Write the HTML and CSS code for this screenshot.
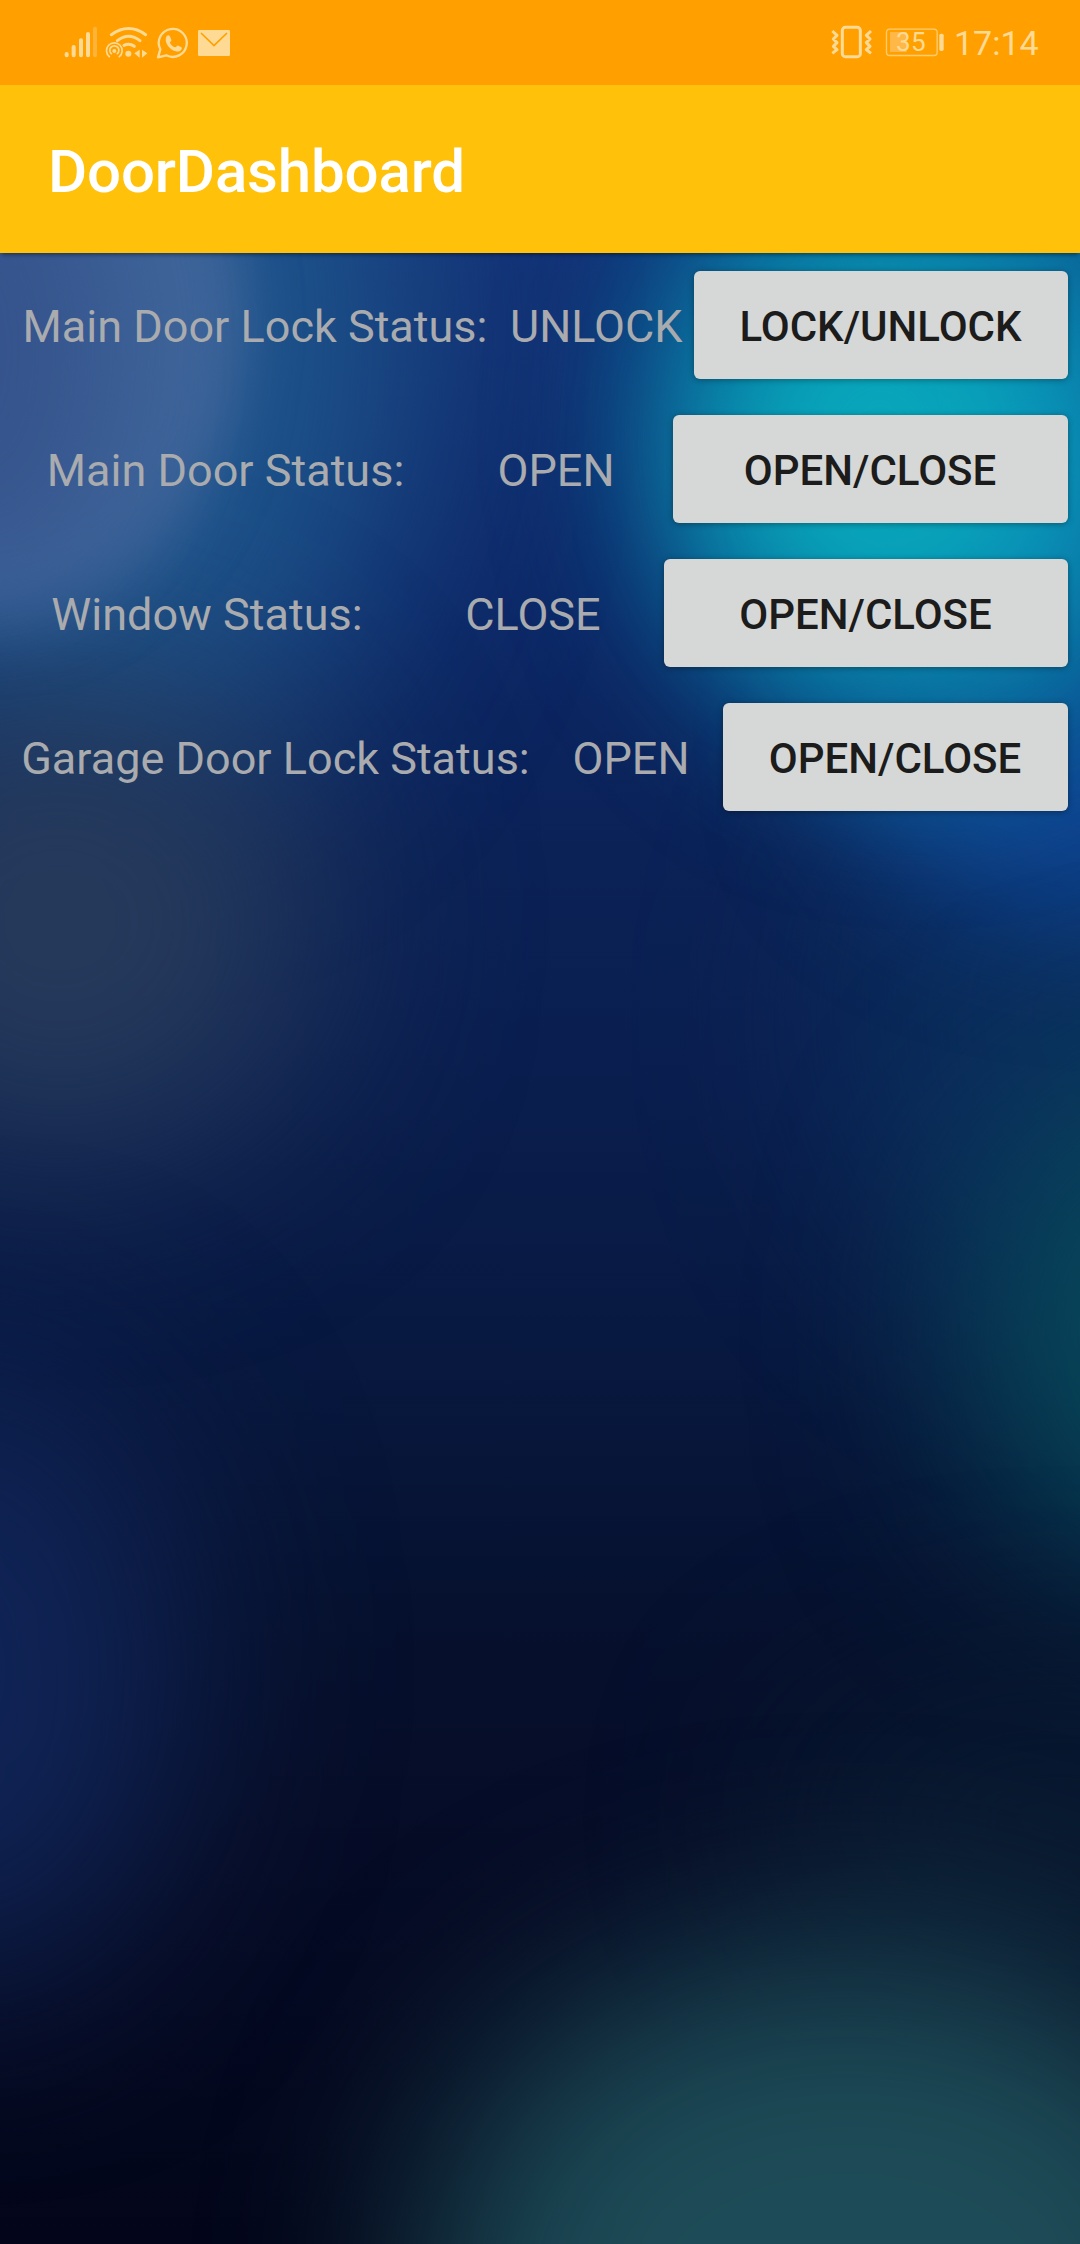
FILE: index.html
```html
<!DOCTYPE html>
<html lang="en">
<head>
<meta charset="utf-8">
<title>DoorDashboard</title>
<link rel="stylesheet" href="styles.css">
</head>
<body>
<div class="screen">
  <header class="status-bar">
    <div class="status-group">
      <svg class="icon" width="51" height="70" viewBox="0 0 153 210">
        <g stroke="#ffda94" stroke-width="12" stroke-linecap="round">
          <path d="M50 132v4M71 111v25M93 91v45M114 72v64"/>
          <path d="M135 56v80" stroke="#ffb338"/>
        </g>
      </svg>
      <svg class="icon" width="52" height="70" viewBox="153 0 156 210">
        <g fill="none" stroke="#ffda94" stroke-width="9" stroke-linecap="round">
          <path d="M184 74Q236 37 287 74"/>
          <path d="M202 92Q236 66 270 92"/>
          <path d="M222 106Q238 98 253 109"/>
          <g stroke-width="5">
            <path d="M178 140A23.500 23.500 0 1 1 208 140"/>
            <path d="M184 131A13.500 13.500 0 1 1 202 131"/>
          </g>
        </g>
        <g fill="#ffda94">
          <circle cx="193" cy="123" r="6"/>
          <circle cx="235" cy="131" r="9"/>
          <path d="M269 119v24l-16-13zM276 119v24l16-13z"/>
        </g>
      </svg>
      <svg class="icon" width="40" height="70" viewBox="309 0 120 210">
        <path d="M324 142l7-24a42 42 0 1 1 18 18z" fill="none" stroke="#ffda94" stroke-width="7" stroke-linejoin="round"/>
        <path d="M350 78c5-4 9-2 11 4l3 8c1 4-5 6-4 9 3 6 9 11 15 13 4 1 6-7 10-5l8 4c6 3 0 11-5 13-21 5-50-25-38-46z" fill="#ffda94"/>
      </svg>
      <svg class="icon" width="42" height="70" viewBox="429 0 126 210">
        <rect x="444" y="60" width="96" height="78" rx="4" fill="#ffda94"/>
        <path d="M453 69l39 38 39-38" fill="none" stroke="#ffa000" stroke-width="5"/>
      </svg>
    </div>
    <div class="status-group">
      <svg class="icon" width="60" height="70" viewBox="0 0 180 210">
        <g fill="none" stroke="#ffda94" stroke-width="9">
          <rect x="67" y="52" width="54" height="88" rx="9"/>
          <path d="M37 63l14 13-11 11 11 11-11 11 11 10-14 11M153 63l-14 13 11 11-11 11 11 11-11 10 14 11" stroke-linejoin="round"/>
        </g>
      </svg>
      <div class="battery">
        <svg class="icon" width="70" height="70" viewBox="180 0 210 210">
          <rect x="199.500" y="57.500" width="152" height="79" rx="10" fill="none" stroke="#ffcd70" stroke-width="4"/>
          <path d="M210 66h50v60h-50z" fill="#ffb845"/>
          <rect x="358" y="71" width="13" height="52" rx="5" fill="#ffda94"/>
        </svg>
        <span class="battery-level">35</span>
      </div>
      <span class="clock">17:14</span>
    </div>
  </header>
  <div class="app-bar"><h1 class="app-title">DoorDashboard</h1></div>
  <main class="content">
    <svg class="wallpaper" viewBox="0 253 1080 1991" preserveAspectRatio="none">
      <defs>
        <linearGradient id="base" x1="0" y1="0" x2="0" y2="1">
          <stop offset="0" stop-color="#123075"/>
          <stop offset=".17" stop-color="#0d2868"/>
          <stop offset=".3" stop-color="#0b2257"/>
          <stop offset=".42" stop-color="#0a1e4e"/>
          <stop offset=".54" stop-color="#081941"/>
          <stop offset=".68" stop-color="#06112f"/>
          <stop offset=".8" stop-color="#060c26"/>
          <stop offset="1" stop-color="#03061a"/>
        </linearGradient>
        <filter id="soft" x="-100%" y="-100%" width="300%" height="300%" color-interpolation-filters="sRGB"><feGaussianBlur stdDeviation="26 34"/></filter>
        <filter id="softer" x="-100%" y="-100%" width="300%" height="300%" color-interpolation-filters="sRGB"><feGaussianBlur stdDeviation="65"/></filter>
        <filter id="softest" x="-150%" y="-150%" width="400%" height="400%" color-interpolation-filters="sRGB"><feGaussianBlur stdDeviation="100"/></filter>
      </defs>
      <rect y="253" width="1080" height="1991" fill="url(#base)"/>
      <ellipse cx="100" cy="330" rx="310" ry="460" fill="#1e548b" filter="url(#softest)"/>
      <ellipse cx="60" cy="920" rx="260" ry="240" fill="#263a5b" filter="url(#softest)"/>
      <ellipse cx="-10" cy="320" rx="255" ry="300" fill="#3e659a" filter="url(#soft)"/>
      <ellipse cx="-20" cy="350" rx="130" ry="230" fill="#34508a" opacity=".85" filter="url(#softer)"/>
      <ellipse cx="1120" cy="1020" rx="280" ry="300" fill="#0b3160" opacity=".8" filter="url(#softest)"/>
      <ellipse cx="1120" cy="740" rx="280" ry="180" fill="#0e4491" filter="url(#softer)"/>
      <ellipse cx="920" cy="430" rx="290" ry="350" fill="#0a699a" filter="url(#softer)"/>
      <ellipse cx="1000" cy="470" rx="130" ry="190" fill="#0a86b4" filter="url(#softer)"/>
      <ellipse cx="880" cy="450" rx="165" ry="190" fill="#08a6bb" filter="url(#softer)"/>
      <ellipse cx="1200" cy="1330" rx="230" ry="250" fill="#07495a" filter="url(#softest)"/>
      <ellipse cx="-40" cy="1670" rx="220" ry="310" fill="#102456" filter="url(#softest)"/>
      <ellipse cx="1060" cy="1820" rx="280" ry="140" fill="#0a1e33" opacity=".8" filter="url(#softest)"/>
      <ellipse cx="850" cy="2290" rx="430" ry="345" fill="#1d4b57" filter="url(#softest)"/>
    </svg>
    <ul class="rows">
      <li class="row row-lock"><span class="cell">Main Door Lock Status:</span><span class="cell">UNLOCK</span><button class="action">LOCK/UNLOCK</button></li>
      <li class="row row-door"><span class="cell">Main Door Status:</span><span class="cell">OPEN</span><button class="action">OPEN/CLOSE</button></li>
      <li class="row row-window"><span class="cell">Window Status:</span><span class="cell">CLOSE</span><button class="action">OPEN/CLOSE</button></li>
      <li class="row row-garage"><span class="cell">Garage Door Lock Status:</span><span class="cell">OPEN</span><button class="action">OPEN/CLOSE</button></li>
    </ul>
  </main>
</div>
</body>
</html>
```
FILE: styles.css
```css
* { box-sizing: border-box; }

body {
  margin: 0;
  font-family: Roboto, "Liberation Sans", sans-serif;
}

.screen {
  display: flex;
  flex-direction: column;
  width: 1080px;
  height: 2244px;
  overflow: hidden;
}

.status-bar {
  display: flex;
  justify-content: space-between;
  height: 85px;
  padding: 10px 42px 0 50px;
  background: #ffa000;
  color: #ffda94;
}

.status-group { display: flex; height: 70px; }

.icon { display: block; flex: none; }

.battery { position: relative; width: 70px; }

.battery-level {
  position: absolute;
  left: 16px;
  top: 17px;
  font-size: 26px;
  line-height: 30px;
  letter-spacing: 0.5px;
}

.clock {
  width: 88px;
  padding-left: 4px;
  font-size: 34px;
  line-height: 66px;
  white-space: nowrap;
}

.app-bar {
  position: relative;
  display: flex;
  align-items: center;
  height: 168px;
  padding-left: 48px;
  background: #ffc10a;
  box-shadow: 0 4px 4px -2px rgba(0, 0, 0, 0.4);
  z-index: 1;
}

.app-title {
  margin: 5px 0 0;
  color: #fff;
  font-size: 60px;
  font-weight: 500;
  line-height: 70px;
  letter-spacing: -0.15px;
}

.content { position: relative; flex: 1; }

.wallpaper {
  position: absolute;
  inset: 0;
  width: 100%;
  height: 100%;
}

.rows {
  position: relative;
  display: flex;
  flex-direction: column;
  gap: 36px;
  margin: 0;
  padding: 18px 12px 0 0;
  list-style: none;
}

.row {
  display: grid;
  align-items: center;
  height: 108px;
}

.row-lock { grid-template-columns: 510px 184px 1fr; }
.row-door { grid-template-columns: 451px 222px 1fr; }
.row-window { grid-template-columns: 414px 250px 1fr; }
.row-garage { grid-template-columns: 551px 172px 1fr; }

.cell {
  padding-top: 2px;
  color: #a9abae;
  font-size: 45px;
  line-height: 53px;
  text-align: center;
  white-space: nowrap;
}

.cell + .cell { padding-right: 12px; }

.action {
  height: 108px;
  padding: 3px 1px 0 0;
  border: 0;
  border-radius: 6px;
  background: #d6d8d7;
  box-shadow: 0 1px 6px rgba(0, 0, 0, 0.35);
  color: #1c1c1c;
  font: 500 42px/50px Roboto, "Liberation Sans", sans-serif;
}
```
